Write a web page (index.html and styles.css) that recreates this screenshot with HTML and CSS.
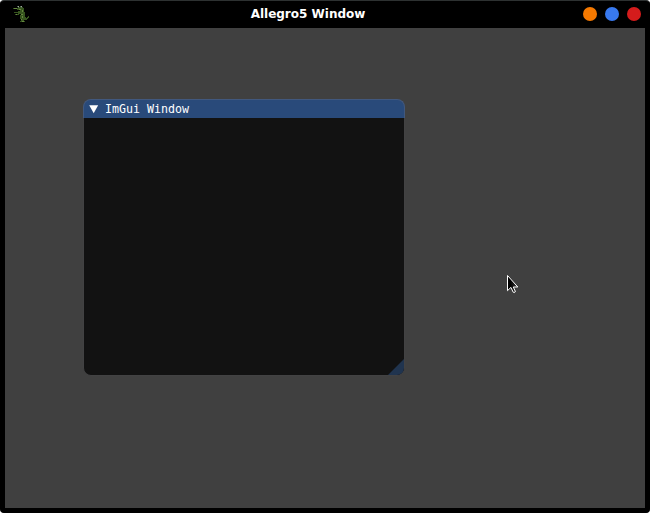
FILE: index.html
```html
<!DOCTYPE html>
<html lang="en">
<head>
<meta charset="utf-8">
<title>Allegro5 Window</title>
<link rel="stylesheet" href="styles.css">
</head>
<body>
<div class="frame">
  <header class="titlebar">
    <svg class="app-icon" width="16" height="18" viewBox="0 0 16 18" shape-rendering="crispEdges" aria-hidden="true">
      <path fill="#37551f" d="M0 3h5v-1h5v1h1v4h1v5h1v1h1v-1h1v-1h1v2h-1v1h-1v1h-3v1h1v1h-5v-1h1v-2h-1v-4h1v-2h-2v-1h1v-2h-3v-1h-4zM1 7h4v-1h2v1h-1v1h-5zM2 9h3v-1h3v1h-2v1h-4z"/>
      <path fill="#668740" d="M1 3h3v1h-3zM6 4h2v1h-2zM9 5h1v2h-1zM8 9h2v1h-2zM9 11h1v2h-1zM8 14h1v1h-1zM3 9h1v1h-1zM9 16h2v1h-2z"/>
      <path fill="#9ba99b" d="M5 1h1v1h-1zM8 1h1v1h-1z"/>
      <path fill="#526350" d="M4 1h1v1h-1zM7 1h1v1h-1zM5 2h1v1h-1zM8 2h1v1h-1z"/>
    </svg>
    <h1 class="title">Allegro5 Window</h1>
    <div class="controls">
      <span class="control minimize"></span>
      <span class="control maximize"></span>
      <span class="control close"></span>
    </div>
  </header>
  <main class="canvas">
    <section class="panel">
      <div class="panel-title">
        <svg class="arrow" width="10" height="9" viewBox="0 0 10 9" aria-hidden="true"><path fill="#fff" d="M.2.3h9L4.7 8.3z"/></svg>
        <span>ImGui Window</span>
      </div>
      <div class="panel-body">
        <svg class="grip" width="16" height="16" viewBox="0 0 16 16" aria-hidden="true"><path fill="#20344f" d="M16 0v10q0 6-6 6H0z"/></svg>
      </div>
    </section>
    <svg class="cursor" width="14" height="21" viewBox="0 0 14 21" aria-hidden="true">
      <defs><linearGradient id="shade"><stop offset=".3" stop-color="#000"/><stop offset="1" stop-color="#404040"/></linearGradient></defs>
      <path fill="url(#shade)" stroke="#fff" stroke-width="1" d="M1.5 1.5v15.2l3.4-3.3 2.3 4.8q1 .8 2-.2v-1l-1.9-4h4.5z"/>
    </svg>
  </main>
</div>
</body>
</html>
```
FILE: styles.css
```css
* { box-sizing: border-box; }

body {
  margin: 0;
  background: #fff;
  overflow: hidden;
}

.frame {
  width: 650px;
  height: 513px;
  padding: 0 4px 4px;
  border: 1px solid #000;
  border-top-color: #2d3131;
  border-radius: 4px;
  background: #000;
  display: flex;
  flex-direction: column;
}

.titlebar {
  height: 27px;
  flex: none;
  display: grid;
  grid-template-columns: 70px 1fr 70px;
  align-items: center;
}

.app-icon {
  margin-left: 8px;
  margin-bottom: 1px;
}

.title {
  margin: 0 34px 0 0;
  padding-bottom: 1px;
  color: #fff;
  font: bold 12px/14px "DejaVu Sans", sans-serif;
  text-align: center;
  white-space: nowrap;
}

.controls {
  display: flex;
  justify-content: flex-end;
  gap: 8px;
  padding: 0 4px 1px 0;
}

.control {
  width: 14px;
  height: 14px;
  flex: none;
  border-radius: 50%;
}

.minimize { background: #f57900; }
.maximize { background: #3879ef; }
.close { background: #d51c1c; }

.canvas {
  position: relative;
  flex: 1;
  background: #404040;
}

.panel {
  position: absolute;
  left: 78px;
  top: 71px;
  width: 322px;
}

.panel-title {
  height: 19px;
  display: flex;
  align-items: center;
  gap: 6px;
  padding-left: 5px;
  border: 1px solid #41587e;
  border-bottom: 0;
  border-radius: 8px 8px 0 0;
  background: #294a7a;
  color: #fff;
  font: 11.63px/18px "DejaVu Sans Mono", monospace;
}

.panel-body {
  height: 258px;
  display: flex;
  align-items: flex-end;
  justify-content: flex-end;
  border: 1px solid #424243;
  border-top: 0;
  border-radius: 0 0 8px 8px;
  background: #121212;
  overflow: hidden;
}

.cursor {
  position: absolute;
  left: 501px;
  top: 246px;
}
```
